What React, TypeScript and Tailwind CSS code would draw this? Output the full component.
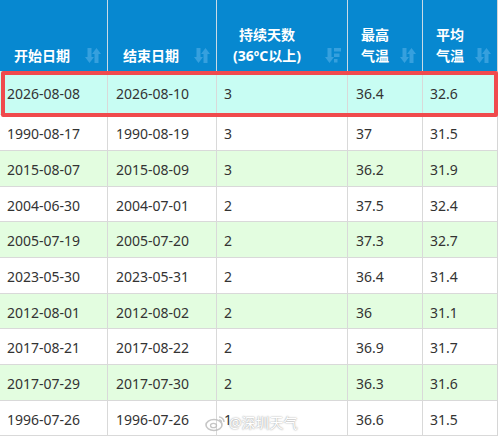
import React from "react";

const rows: [string, string, string, string, string][] = [
  ["2026-08-08", "2026-08-10", "3", "36.4", "32.6"],
  ["1990-08-17", "1990-08-19", "3", "37", "31.5"],
  ["2015-08-07", "2015-08-09", "3", "36.2", "31.9"],
  ["2004-06-30", "2004-07-01", "2", "37.5", "32.4"],
  ["2005-07-19", "2005-07-20", "2", "37.3", "32.7"],
  ["2023-05-30", "2023-05-31", "2", "36.4", "31.4"],
  ["2012-08-01", "2012-08-02", "2", "36", "31.1"],
  ["2017-08-21", "2017-08-22", "2", "36.9", "31.7"],
  ["2017-07-29", "2017-07-30", "2", "36.3", "31.6"],
  ["1996-07-26", "1996-07-26", "1", "36.6", "31.5"],
];

const heights = ["h-[44px]", "h-[36px]", "h-[36px]", "h-[35px]", "h-[36px]", "h-[36px]", "h-[35px]", "h-[36px]", "h-[36px]", "h-[35px]"];

function SortIcon() {
  return (
    <svg width="16" height="17" viewBox="0 0 16 17" className="shrink-0">
      <g fill="#36a0de">
        <rect x="2.5" y="1" width="4" height="10" />
        <polygon points="0,10 9,10 4.5,16" />
        <rect x="9.5" y="6" width="4" height="10" />
        <polygon points="7,7 16,7 11.5,1" />
      </g>
    </svg>
  );
}

function SortDescIcon() {
  return (
    <svg width="16" height="17" viewBox="0 0 16 17" className="shrink-0">
      <g fill="#36a0de">
        <rect x="2.5" y="1" width="4" height="10" />
        <polygon points="0,10 9,10 4.5,16" />
        <rect x="9" y="1" width="7" height="3.5" />
        <rect x="9" y="6.5" width="5.5" height="3.5" />
        <rect x="9" y="12" width="3.5" height="3.5" />
      </g>
    </svg>
  );
}

function HeaderCell({
  lines,
  icon,
  center,
  pl,
}: {
  lines: string[];
  icon?: React.ReactNode;
  center?: boolean;
  pl: string;
}) {
  return (
    <div className={`flex items-end justify-between border-r border-[#c9dbe6] pb-[5px] pr-[6px] ${pl}`}>
      <div className={`flex flex-col ${center ? "items-center" : "items-start"} text-[14px] font-bold leading-[21px] text-white`}>
        {lines.map((l) => (
          <span key={l}>{l}</span>
        ))}
      </div>
      <div className="mb-[2px]">{icon ?? <SortIcon />}</div>
    </div>
  );
}

export default function App() {
  return (
    <div
      className="relative h-[438px] w-[499px] overflow-hidden bg-white"
      style={{ fontFamily: '"Noto Sans", "Noto Sans CJK SC", sans-serif' }}
    >
      <div className="w-[498px] border-r border-[#d6d6d6]">
        <div className="grid h-[71px] grid-cols-[108px_109px_131px_75px_74px] bg-[#0788d0]">
          <HeaderCell lines={["开始日期"]} pl="pl-[14px]" />
          <HeaderCell lines={["结束日期"]} pl="pl-[15px]" />
          <HeaderCell lines={["持续天数", "(36ºC以上)"]} center pl="pl-[16px]" icon={<SortDescIcon />} />
          <HeaderCell lines={["最高", "气温"]} pl="pl-[13px]" />
          <div className="flex items-end justify-between pb-[5px] pl-[13px] pr-[6px]">
            <div className="flex flex-col text-[14px] font-bold leading-[21px] text-white">
              <span>平均</span>
              <span>气温</span>
            </div>
            <div className="mb-[2px]">
              <SortIcon />
            </div>
          </div>
        </div>
        {rows.map((r, i) => {
          const bg = i === 0 ? "bg-[#c8fdf3]" : i % 2 === 0 ? "bg-[#e3fde0]" : "bg-white";
          return (
            <div
              key={i}
              className={`grid grid-cols-[108px_109px_131px_75px_74px] border-b border-[#d9d9d9] text-[14px] text-[#333333] ${bg} ${heights[i]}`}
            >
              <div className="flex items-center border-r border-[#d9d9d9] pl-[7px] pt-[2px]">{r[0]}</div>
              <div className="flex items-center border-r border-[#d9d9d9] pl-[8px] pt-[2px]">{r[1]}</div>
              <div className="flex items-center border-r border-[#d9d9d9] pl-[7px] pt-[2px]">{r[2]}</div>
              <div className="flex items-center border-r border-[#d9d9d9] pl-[8px] pt-[2px]">{r[3]}</div>
              <div className="flex items-center pl-[7px] pt-[2px]">{r[4]}</div>
            </div>
          );
        })}
      </div>

      {/* red highlight box */}
      <div className="pointer-events-none absolute left-[1px] top-[71px] h-[46px] w-[497px] rounded-[2px] border-[4px] border-[#f04a4d]" />

      {/* watermark */}
      <div className="pointer-events-none absolute left-[205px] top-[412px] flex items-center gap-[2px] opacity-80">
        <svg width="22" height="18" viewBox="0 0 22 18">
          <ellipse cx="9" cy="11" rx="8" ry="5.5" fill="none" stroke="#b9b9b9" strokeWidth="1.6" />
          <ellipse cx="8.5" cy="11.5" rx="3" ry="2.2" fill="none" stroke="#b9b9b9" strokeWidth="1.3" />
          <path d="M14 3 a5 5 0 0 1 5 5" fill="none" stroke="#b9b9b9" strokeWidth="1.5" />
          <path d="M14 6 a2.5 2.5 0 0 1 2.5 2.5" fill="none" stroke="#b9b9b9" strokeWidth="1.3" />
        </svg>
        <span
          className="text-[14px] text-white"
          style={{ textShadow: "0 0 2px #9a9a9a, 0 0 1px #9a9a9a" }}
        >
          @深圳天气
        </span>
      </div>
    </div>
  );
}
